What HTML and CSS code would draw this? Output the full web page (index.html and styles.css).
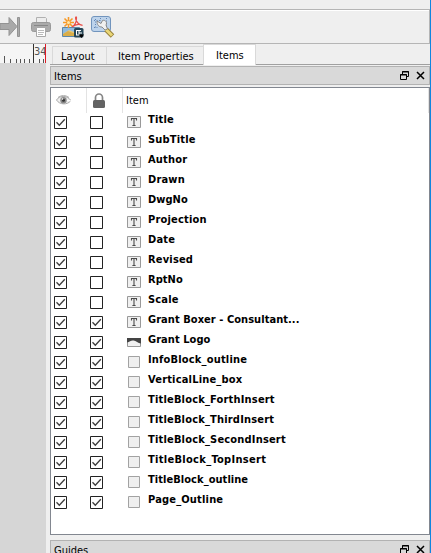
FILE: index.html
```html
<!DOCTYPE html>
<html lang="en">
<head>
<meta charset="utf-8">
<title>Layout Items</title>
<link rel="stylesheet" href="styles.css">
</head>
<body>
<svg class="defs" width="0" height="0">
  <symbol id="on" viewBox="0 0 13 13"><path d="M.5.5h12v12H.5z" fill="#fff" stroke="#222"/><path d="M2.5 6.3l2.8 2.9 5.5-6" fill="none" stroke="#3c3c3c" stroke-width="1.3"/></symbol>
  <symbol id="off" viewBox="0 0 13 13"><path d="M.5.5h12v12H.5z" fill="#fff" stroke="#222"/></symbol>
  <symbol id="text" viewBox="0 0 14 13"><path d="M.5.5h13v11H.5z" fill="#f0f0f0" stroke="#999"/><path d="M4.500 4.5V2.500h5v2M7 2.500v7M5.4 9.500h3.2" fill="none" stroke="#4b4b4b" stroke-width="1.100"/></symbol>
  <symbol id="pic" viewBox="0 0 14 13"><path d="M.5 2.5h13v8H.5z" fill="#f0f0f0" stroke="#999"/><path d="M0 2h14v5.500C11 7 9 5 6.500 4.500S3 6 0 6.500z" fill="#444"/></symbol>
  <symbol id="box" viewBox="0 0 14 13"><path d="M1.500.5h11v11h-11z" fill="#efefef" stroke="#a2a2a2"/></symbol>
  <symbol id="float" viewBox="0 0 9 9"><path d="M2.500 3V.5h6v5H7M2 1h7M0 4h7M.5 3.500h6v5h-6z" fill="none" stroke="#000"/></symbol>
  <symbol id="close" viewBox="0 0 9 9"><path d="M1 1l7 7M8 1L1 8" fill="none" stroke="#000" stroke-width="1.500"/></symbol>
</svg>
<div class="window">
  <div class="topstrip"></div>
  <div class="toolbar">
    <svg width="120" height="33" viewBox="0 10 120 33">
      <path d="M0 23.500h9v-6l8 9-8 9v-6H0z" fill="#a9a9a9" stroke="#939393"/><path d="M17.500 17.500h2v19h-2z" fill="#a9a9a9" stroke="#939393"/>
      <path d="M36.500 24v-6.500h9l1 1V24" fill="#ededed" stroke="#b0b0b0"/>
      <rect x="31.500" y="22.500" width="19" height="9" rx="2" fill="#ababab" stroke="#999"/><path d="M34 25.500h14" stroke="#888"/>
      <path d="M36.500 27.500h9v9h-9z" fill="#fff" stroke="#a8a8a8"/><path d="M38 30.500h6M38 32.500h6M38 34.500h5" stroke="#bbb"/>
      <path d="M62.500 27.500h17v9h-17z" fill="#e8c878" stroke="#5c86a8"/><path d="M63 28h16v3l-5 1-5-2-6 4z" fill="#8ebbe0"/><path d="M63 34l5-3 5 2 6-1v4H63z" fill="#d9ad48"/>
      <path d="M68.500 17v11M63 22.500h11M64.500 18.500l8 8M72.500 18.500l-8 8" stroke="#f79a28" stroke-width="1.600"/><circle cx="68.500" cy="22.500" r="1.500" fill="#ffe8a8"/>
      <path d="M72 27c3-2 4.500-5.500 4.500-9 .2-2-1.500-1-.8 1 1 3.500 3.500 5.800 6.800 6.400-3-1.600-7.500-.9-10.500 1.600" fill="none" stroke="#e9504a" stroke-width="1.200"/>
      <rect x="74" y="28" width="9.500" height="9.500" rx="1.500" fill="#264657"/><path d="M76 30.500h5M76.500 30v5M79 33h3M79 30v5M76 35h4" stroke="#fff" fill="none"/><path d="M78.500 34.500h5.500L81.500 38z" fill="#000"/>
      <rect x="91.500" y="16.500" width="19" height="15" rx="2.500" fill="#bdd3eb" stroke="#7194bd"/><path d="M95.500 19v9M100.500 18v3M106.500 18v10M94 20.500h6M94 27.500h5" stroke="#6386b5" stroke-dasharray="1 1.500" fill="none"/>
      <path d="M106 29.500l6.500 6.500" stroke="#97803a" stroke-width="5"/><path d="M106 29.500l6 6" stroke="#ead778" stroke-width="3"/>
      <path d="M97 21l4 2.500 1.500-3c3-1 5 2 3.500 4.500l1.500 4-2.500 1-3-3c-3 0-5-2-5-6z" fill="#f0f0f0" stroke="#808080" stroke-width=".9"/>
    </svg>
  </div>
  <div class="main">
    <div class="canvas">
      <svg class="ruler" width="46" height="19"><path d="M33.500 0v19" stroke="#333"/><path d="M4.500 12v7M10.500 15v4M16.500 15v4M20.500 15v4M24.500 15v4M29.500 15v4M39.500 15v4M43.500 15v4" stroke="#555"/><text x="34" y="11" font-size="11" fill="#555">34</text><path d="M45.500 0v19" stroke="#e01b24"/></svg>
    </div>
    <div class="side">
      <div class="tabs"><div class="tab t1"><span>Layout</span></div><div class="tab t2"><span>Item Properties</span></div><div class="tab t3"><span>Items</span></div></div>
      <div class="dock"><span>Items</span><svg class="fl"><use href="#float"/></svg><svg class="cl"><use href="#close"/></svg></div>
      <div class="list">
        <div class="head">
          <div class="h1"><svg width="15" height="11" viewBox="0 0 15 11"><path d="M.5 5C3 .5 11 0 14.500 5M.5 5c3 5 11 5 14 1" fill="#eee" stroke="#aaa"/><path d="M2 2.500C5 0 10 0 13 2.500" stroke="#aaa" fill="none"/><circle cx="7.500" cy="5.300" r="3.200" fill="#888"/><circle cx="7.500" cy="5.300" r="1.500" fill="#333"/><circle cx="6.500" cy="4" r=".8" fill="#fff"/></svg></div>
          <div class="h2"><svg width="12" height="15" viewBox="0 0 12 15"><path d="M2.500 8V4.500a3.500 3.500 0 0 1 7 0V8" fill="none" stroke="#858585" stroke-width="1.700"/><rect y="7" width="12" height="8" rx="1.500" fill="#636363"/></svg></div>
          <div class="h3">Item</div>
        </div>
        <div class="row"><svg><use href="#on"/></svg><svg><use href="#off"/></svg><svg class="ic"><use href="#text"/></svg><b>Title</b></div>
        <div class="row"><svg><use href="#on"/></svg><svg><use href="#off"/></svg><svg class="ic"><use href="#text"/></svg><b>SubTitle</b></div>
        <div class="row"><svg><use href="#on"/></svg><svg><use href="#off"/></svg><svg class="ic"><use href="#text"/></svg><b>Author</b></div>
        <div class="row"><svg><use href="#on"/></svg><svg><use href="#off"/></svg><svg class="ic"><use href="#text"/></svg><b>Drawn</b></div>
        <div class="row"><svg><use href="#on"/></svg><svg><use href="#off"/></svg><svg class="ic"><use href="#text"/></svg><b class="tight">DwgNo</b></div>
        <div class="row"><svg><use href="#on"/></svg><svg><use href="#off"/></svg><svg class="ic"><use href="#text"/></svg><b>Projection</b></div>
        <div class="row"><svg><use href="#on"/></svg><svg><use href="#off"/></svg><svg class="ic"><use href="#text"/></svg><b>Date</b></div>
        <div class="row"><svg><use href="#on"/></svg><svg><use href="#off"/></svg><svg class="ic"><use href="#text"/></svg><b>Revised</b></div>
        <div class="row"><svg><use href="#on"/></svg><svg><use href="#off"/></svg><svg class="ic"><use href="#text"/></svg><b class="tight">RptNo</b></div>
        <div class="row"><svg><use href="#on"/></svg><svg><use href="#off"/></svg><svg class="ic"><use href="#text"/></svg><b>Scale</b></div>
        <div class="row"><svg><use href="#on"/></svg><svg><use href="#on"/></svg><svg class="ic"><use href="#text"/></svg><b class="tight">Grant Boxer - Consultant...</b></div>
        <div class="row"><svg><use href="#on"/></svg><svg><use href="#on"/></svg><svg class="ic"><use href="#pic"/></svg><b class="tight">Grant Logo</b></div>
        <div class="row"><svg><use href="#on"/></svg><svg><use href="#on"/></svg><svg class="ic"><use href="#box"/></svg><b>InfoBlock_outline</b></div>
        <div class="row"><svg><use href="#on"/></svg><svg><use href="#on"/></svg><svg class="ic"><use href="#box"/></svg><b>VerticalLine_box</b></div>
        <div class="row"><svg><use href="#on"/></svg><svg><use href="#on"/></svg><svg class="ic"><use href="#box"/></svg><b>TitleBlock_ForthInsert</b></div>
        <div class="row"><svg><use href="#on"/></svg><svg><use href="#on"/></svg><svg class="ic"><use href="#box"/></svg><b>TitleBlock_ThirdInsert</b></div>
        <div class="row"><svg><use href="#on"/></svg><svg><use href="#on"/></svg><svg class="ic"><use href="#box"/></svg><b>TitleBlock_SecondInsert</b></div>
        <div class="row"><svg><use href="#on"/></svg><svg><use href="#on"/></svg><svg class="ic"><use href="#box"/></svg><b class="wide">TitleBlock_TopInsert</b></div>
        <div class="row"><svg><use href="#on"/></svg><svg><use href="#on"/></svg><svg class="ic"><use href="#box"/></svg><b class="tight">TitleBlock_outline</b></div>
        <div class="row"><svg><use href="#on"/></svg><svg><use href="#on"/></svg><svg class="ic"><use href="#box"/></svg><b>Page_Outline</b></div>
      </div>
      <div class="dock guides"><span>Guides</span><svg class="fl"><use href="#float"/></svg><svg class="cl"><use href="#close"/></svg></div>
    </div>
  </div>
</div>
</body>
</html>
```
FILE: styles.css
```css
* { box-sizing: border-box; }
body { margin: 0; font: 11px/14px "DejaVu Sans Condensed", "DejaVu Sans", sans-serif; font-stretch: condensed; color: #000; }
svg { display: block; flex: none; }
.defs { position: absolute; }
.window { width: 431px; height: 553px; overflow: hidden; background: #efefef; border-right: 1px solid #0f86e0; display: flex; flex-direction: column; }
.topstrip { height: 9px; flex: none; }
.toolbar { height: 35px; flex: none; border: solid #b5b5b5; border-width: 1px 1px 1px 0; box-shadow: inset 0 1px #fff; }
.main { display: flex; flex: 1; min-height: 0; }
.canvas { width: 46px; background: #d6d6d6; margin-right: 4px; }
.ruler { background: #f5f5f5; }
.side { width: 380px; display: flex; flex-direction: column; }
.tabs { height: 21px; flex: none; display: flex; align-items: flex-start; padding-left: 2px; border-bottom: 1px solid #a0a0a0; }
.tab { height: 18px; margin-top: 2px; padding-top: 3px; border: solid #d9d9d9; border-width: 1px 0 0 1px; white-space: nowrap; }
.t1 { width: 54px; padding-left: 8px; }
.t2 { width: 97px; padding-left: 11px; }
.t3 { width: 53px; height: 21px; margin-top: 0; padding: 4px 0 0 12px; background: #fff; border-right-width: 1px; }
.dock { height: 19px; flex: none; margin-top: 1px; border: 1px solid #b2b2b2; background: #d9d9d9; display: flex; align-items: center; padding: 1px 4px 0 3px; }
.dock span { flex: 1; padding-top: 2px; }
.fl, .cl { width: 9px; height: 9px; margin-bottom: 1px; }
.cl { margin-left: 7px; }
.list { margin-top: 2px; height: 448px; flex: none; border: 1px solid #828790; background: #fff; }
.head { height: 25px; display: flex; align-items: center; border-right: 1px solid #e3e3e3; }
.h1, .h2 { width: 36px; height: 25px; border-right: 1px solid #e3e3e3; display: flex; align-items: center; padding-left: 5px; }
.h2 { padding-left: 6px; }
.h3 { padding-left: 3px; }
.row { height: 20px; display: flex; align-items: flex-start; padding: 3px 0 0 3px; }
.row svg { width: 13px; height: 13px; margin-right: 23px; }
.row .ic { width: 14px; margin: 0 7px 0 1px; }
.row b { margin-top: -3px; white-space: nowrap; letter-spacing: .18px; }
.row .tight { letter-spacing: .05px; }
.row .wide { letter-spacing: .3px; }
.guides { margin-top: 5px; }
```
